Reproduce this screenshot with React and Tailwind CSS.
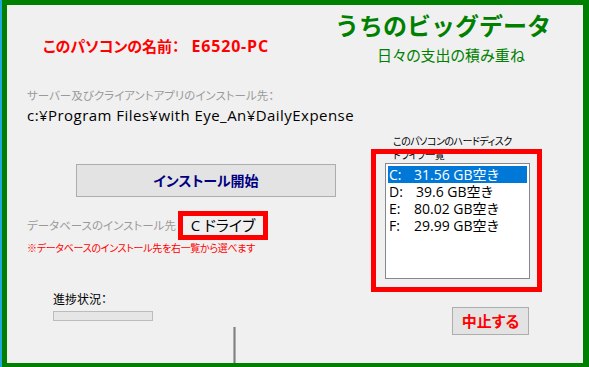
import React from "react";

const drives = [
  { letter: "C:", free: "31.56 GB空き", selected: true },
  { letter: "D:", free: "39.6 GB空き", pad: true },
  { letter: "E:", free: "80.02 GB空き" },
  { letter: "F:", free: "29.99 GB空き" },
];

export default function App() {
  return (
    <div className="w-[589px] h-[367px] bg-[#1ea7e1] pl-[2px] font-['Open_Sans','Noto_Sans_CJK_JP',sans-serif] [font-feature-settings:'palt'] text-black overflow-hidden">
      <div className="h-full bg-[#f0f0f0] border-[#008000] border-t-[5px] border-l-[5px] border-r-[6px] border-b-[4px] flex flex-col">

        {/* HEADER */}
        <div className="h-[62px] flex shrink-0">
          <div className="w-[328px] pl-[36px] pt-[33px]">
            <p className="flex items-baseline text-[15px] leading-none font-bold text-[#ff0000] whitespace-nowrap">
              <span>このパソコンの名前：</span>
              <span className="ml-[12px] text-[16px] tracking-[0.8px]">E6520-PC</span>
            </p>
          </div>
          <div className="pt-[9px] [font-feature-settings:normal]">
            <p className="text-[24px] leading-none font-bold text-[#008000]">
              うちのビッグデータ
            </p>
            <p className="mt-[10px] ml-[42px] text-[15px] leading-none text-[#008000] [font-feature-settings:'palt']">
              日々の支出の積み重ね
            </p>
          </div>
        </div>

        {/* INSTALL PATH */}
        <div className="pl-[20px] pt-[23px] h-[67px] shrink-0">
          <p className="text-[11.5px] leading-none text-[#9a9a9a]">
            サーバー及びクライアントアプリのインストール先：
          </p>
          <p className="mt-[3px] text-[15px] leading-[20px] tracking-[0.45px]">
            c:¥Program Files¥with Eye_An¥DailyExpense
          </p>
        </div>

        {/* MAIN */}
        <div className="flex shrink-0">
          <div className="w-[364px]">
            <button className="mt-[30px] ml-[69px] w-[260px] h-[33px] bg-[#e3e3e3] border border-[#adadad] text-[14px] font-bold text-[#000080]">
              インストール開始
            </button>

            <div className="mt-[14px] flex items-center">
              <p className="w-[171px] pl-[20px] text-[11.5px] text-[#9a9a9a] whitespace-nowrap">
                データベースのインストール先
              </p>
              <div className="w-[90px] h-[29px] border-[5px] border-[#ff0000] flex items-center justify-center text-[15px] leading-none">
                C ドライブ
              </div>
            </div>

            <p className="mt-[2px] pl-[20px] text-[10px] leading-[13px] tracking-[-0.3px] text-[#ff0000] whitespace-nowrap">
              ※データベースのインストール先を右一覧から選べます
            </p>
          </div>

          <div className="w-[171px]">
            <div className="pl-[22px] text-[10px] leading-[14px] tracking-[-0.5px] whitespace-nowrap">
              <p>このパソコンのハードディスク</p>
              <p>ドライブ一覧</p>
            </div>
            <div className="relative mt-[-13px] h-[143px] border-[5px] border-[#ff0000] pt-[9px] pl-[9px]">
              <div className="w-[145px] h-[116px] bg-white border border-[#828790] p-[2px]">
                {drives.map((d) => (
                  <div
                    key={d.letter}
                    className={`h-[17px] pl-[1px] flex items-center text-[14px] leading-none whitespace-nowrap ${
                      d.selected ? "bg-[#0078d7] text-white" : ""
                    }`}
                  >
                    <span className="w-[25px]">{d.letter}</span>
                    <span className={d.pad ? "ml-[2px]" : ""}>{d.free}</span>
                  </div>
                ))}
              </div>
            </div>
          </div>
        </div>

        {/* FOOTER */}
        <div className="flex flex-1">
          <div className="w-[226px] pl-[46px] pt-[1px]">
            <p className="text-[12px] leading-[14px]">進捗状況：</p>
            <div className="mt-[4px] w-[100px] h-[10px] border border-[#bcbcbc] bg-[#e6e6e6]" />
          </div>
          <div className="self-end w-[3px] h-[36px] bg-gradient-to-r from-[#c8c8c8] via-[#808080] to-[#c8c8c8]" />
          <button className="ml-[216px] mt-[15px] w-[77px] h-[28px] bg-[#e3e3e3] border border-[#adadad] text-[15px] font-bold text-[#ff0000]">
            中止する
          </button>
        </div>

      </div>
    </div>
  );
}
